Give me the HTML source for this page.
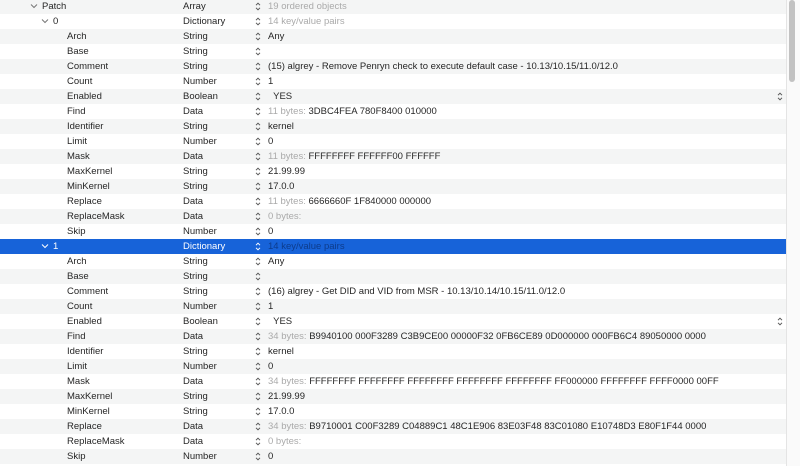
<!DOCTYPE html>
<html><head><style>
body{margin:0;width:800px;height:466px;overflow:hidden;background:#fff;font-family:"Liberation Sans",Arial,sans-serif;font-size:9.5px;color:#262626;position:relative}
.r{position:absolute;left:0;width:786px;height:15px;line-height:15px}
.g{background:#f4f5f5}
.s{background:#1763d9;color:#fff}
.k,.t,.v,.c,.st{position:absolute;top:0;white-space:nowrap}
.t{left:183px}
.st{left:255px;top:3px;width:6px;height:9px}
.v{left:268px}
.gr{color:#aaa}
.s .gr{color:#0d3c8c}
.c{top:4px;width:8px;height:6px}
#sb{position:absolute;left:786px;top:0;width:14px;height:466px;background:#fafafa;border-left:1px solid #e4e4e4}
#th{position:absolute;left:789px;top:0;width:6px;height:82px;background:#c2c2c2;border-radius:3px}
</style></head><body>
<svg width="0" height="0" style="position:absolute"><defs>
<symbol id="ud" viewBox="0 0 6 9"><path d="M1 3.2L3 1.2L5 3.2M1 5.8L3 7.8L5 5.8" fill="none" stroke="currentColor" stroke-width="1"/></symbol>
<symbol id="dn" viewBox="0 0 8 6"><path d="M1 1.5L4 4.5L7 1.5" fill="none" stroke="currentColor" stroke-width="1"/></symbol>
</defs></svg>
<div class="r g" style="top:-1px"><svg class="c" style="left:30px;color:#777"><use href="#dn"/></svg><span class="k" style="left:42px">Patch</span><span class="t">Array</span><svg class="st" style="color:#555"><use href="#ud"/></svg><span class="v gr">19 ordered objects</span></div>
<div class="r" style="top:14px"><svg class="c" style="left:41px;color:#777"><use href="#dn"/></svg><span class="k" style="left:53px">0</span><span class="t">Dictionary</span><svg class="st" style="color:#555"><use href="#ud"/></svg><span class="v gr">14 key/value pairs</span></div>
<div class="r g" style="top:29px"><span class="k" style="left:67px">Arch</span><span class="t">String</span><svg class="st" style="color:#555"><use href="#ud"/></svg><span class="v">Any</span></div>
<div class="r" style="top:44px"><span class="k" style="left:67px">Base</span><span class="t">String</span><svg class="st" style="color:#555"><use href="#ud"/></svg><span class="v"></span></div>
<div class="r g" style="top:59px"><span class="k" style="left:67px">Comment</span><span class="t">String</span><svg class="st" style="color:#555"><use href="#ud"/></svg><span class="v">(15) algrey - Remove Penryn check to execute default case - 10.13/10.15/11.0/12.0</span></div>
<div class="r" style="top:74px"><span class="k" style="left:67px">Count</span><span class="t">Number</span><svg class="st" style="color:#555"><use href="#ud"/></svg><span class="v">1</span></div>
<div class="r g" style="top:89px"><span class="k" style="left:67px">Enabled</span><span class="t">Boolean</span><svg class="st" style="color:#555"><use href="#ud"/></svg><span class="v">&nbsp; YES</span><svg class="st" style="left:777px;color:#555"><use href="#ud"/></svg></div>
<div class="r" style="top:104px"><span class="k" style="left:67px">Find</span><span class="t">Data</span><svg class="st" style="color:#555"><use href="#ud"/></svg><span class="v"><span class="gr">11 bytes:</span> 3DBC4FEA 780F8400 010000</span></div>
<div class="r g" style="top:119px"><span class="k" style="left:67px">Identifier</span><span class="t">String</span><svg class="st" style="color:#555"><use href="#ud"/></svg><span class="v">kernel</span></div>
<div class="r" style="top:134px"><span class="k" style="left:67px">Limit</span><span class="t">Number</span><svg class="st" style="color:#555"><use href="#ud"/></svg><span class="v">0</span></div>
<div class="r g" style="top:149px"><span class="k" style="left:67px">Mask</span><span class="t">Data</span><svg class="st" style="color:#555"><use href="#ud"/></svg><span class="v"><span class="gr">11 bytes:</span> FFFFFFFF FFFFFF00 FFFFFF</span></div>
<div class="r" style="top:164px"><span class="k" style="left:67px">MaxKernel</span><span class="t">String</span><svg class="st" style="color:#555"><use href="#ud"/></svg><span class="v">21.99.99</span></div>
<div class="r g" style="top:179px"><span class="k" style="left:67px">MinKernel</span><span class="t">String</span><svg class="st" style="color:#555"><use href="#ud"/></svg><span class="v">17.0.0</span></div>
<div class="r" style="top:194px"><span class="k" style="left:67px">Replace</span><span class="t">Data</span><svg class="st" style="color:#555"><use href="#ud"/></svg><span class="v"><span class="gr">11 bytes:</span> 6666660F 1F840000 000000</span></div>
<div class="r g" style="top:209px"><span class="k" style="left:67px">ReplaceMask</span><span class="t">Data</span><svg class="st" style="color:#555"><use href="#ud"/></svg><span class="v gr">0 bytes:</span></div>
<div class="r" style="top:224px"><span class="k" style="left:67px">Skip</span><span class="t">Number</span><svg class="st" style="color:#555"><use href="#ud"/></svg><span class="v">0</span></div>
<div class="r s" style="top:239px"><svg class="c" style="left:41px;color:#fff"><use href="#dn"/></svg><span class="k" style="left:53px">1</span><span class="t">Dictionary</span><svg class="st" style="color:#fff"><use href="#ud"/></svg><span class="v gr">14 key/value pairs</span></div>
<div class="r" style="top:254px"><span class="k" style="left:67px">Arch</span><span class="t">String</span><svg class="st" style="color:#555"><use href="#ud"/></svg><span class="v">Any</span></div>
<div class="r g" style="top:269px"><span class="k" style="left:67px">Base</span><span class="t">String</span><svg class="st" style="color:#555"><use href="#ud"/></svg><span class="v"></span></div>
<div class="r" style="top:284px"><span class="k" style="left:67px">Comment</span><span class="t">String</span><svg class="st" style="color:#555"><use href="#ud"/></svg><span class="v">(16) algrey - Get DID and VID from MSR - 10.13/10.14/10.15/11.0/12.0</span></div>
<div class="r g" style="top:299px"><span class="k" style="left:67px">Count</span><span class="t">Number</span><svg class="st" style="color:#555"><use href="#ud"/></svg><span class="v">1</span></div>
<div class="r" style="top:314px"><span class="k" style="left:67px">Enabled</span><span class="t">Boolean</span><svg class="st" style="color:#555"><use href="#ud"/></svg><span class="v">&nbsp; YES</span><svg class="st" style="left:777px;color:#555"><use href="#ud"/></svg></div>
<div class="r g" style="top:329px"><span class="k" style="left:67px">Find</span><span class="t">Data</span><svg class="st" style="color:#555"><use href="#ud"/></svg><span class="v"><span class="gr">34 bytes:</span> B9940100 000F3289 C3B9CE00 00000F32 0FB6CE89 0D000000 000FB6C4 89050000 0000</span></div>
<div class="r" style="top:344px"><span class="k" style="left:67px">Identifier</span><span class="t">String</span><svg class="st" style="color:#555"><use href="#ud"/></svg><span class="v">kernel</span></div>
<div class="r g" style="top:359px"><span class="k" style="left:67px">Limit</span><span class="t">Number</span><svg class="st" style="color:#555"><use href="#ud"/></svg><span class="v">0</span></div>
<div class="r" style="top:374px"><span class="k" style="left:67px">Mask</span><span class="t">Data</span><svg class="st" style="color:#555"><use href="#ud"/></svg><span class="v"><span class="gr">34 bytes:</span> FFFFFFFF FFFFFFFF FFFFFFFF FFFFFFFF FFFFFFFF FF000000 FFFFFFFF FFFF0000 00FF</span></div>
<div class="r g" style="top:389px"><span class="k" style="left:67px">MaxKernel</span><span class="t">String</span><svg class="st" style="color:#555"><use href="#ud"/></svg><span class="v">21.99.99</span></div>
<div class="r" style="top:404px"><span class="k" style="left:67px">MinKernel</span><span class="t">String</span><svg class="st" style="color:#555"><use href="#ud"/></svg><span class="v">17.0.0</span></div>
<div class="r g" style="top:419px"><span class="k" style="left:67px">Replace</span><span class="t">Data</span><svg class="st" style="color:#555"><use href="#ud"/></svg><span class="v"><span class="gr">34 bytes:</span> B9710001 C00F3289 C04889C1 48C1E906 83E03F48 83C01080 E10748D3 E80F1F44 0000</span></div>
<div class="r" style="top:434px"><span class="k" style="left:67px">ReplaceMask</span><span class="t">Data</span><svg class="st" style="color:#555"><use href="#ud"/></svg><span class="v gr">0 bytes:</span></div>
<div class="r g" style="top:449px"><span class="k" style="left:67px">Skip</span><span class="t">Number</span><svg class="st" style="color:#555"><use href="#ud"/></svg><span class="v">0</span></div>
<div id="sb"></div><div id="th"></div>
</body></html>
